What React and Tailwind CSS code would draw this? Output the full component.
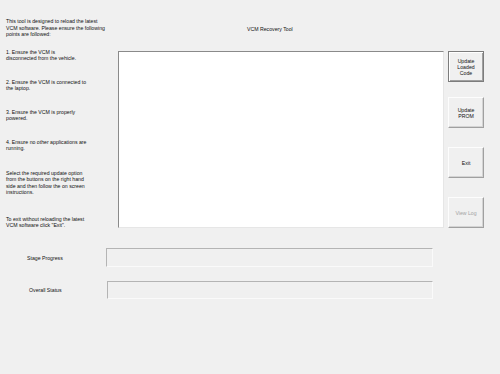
import React from "react";

const font = { fontFamily: '"Liberation Sans", Arial, sans-serif' };

function Btn({ lines, first, disabled, className = "" }) {
  const base =
    "w-[36px] h-[31px] flex flex-col items-center justify-center bg-[#f0f0f0] text-[5.2px] leading-[6px] text-center";
  const border = first
    ? "border border-[#7c7c7c] shadow-[inset_1px_1px_0_#ffffff,inset_-1px_-1px_0_#a0a0a0]"
    : "border border-t-[#fdfdfd] border-l-[#fdfdfd] border-b-[#a0a0a0] border-r-[#a0a0a0] shadow-[inset_-1px_-1px_0_#d4d4d4]";
  return (
    <div className={`${base} ${border} ${disabled ? "text-[#a3a3a3]" : "text-[#111]"} ${className}`}>
      {lines.map((l, i) => (
        <span key={i}>{l}</span>
      ))}
    </div>
  );
}

export default function App() {
  return (
    <div
      className="w-[500px] h-[374px] bg-[#f0f0f0] text-[#111] text-[5.2px] leading-[6.5px] overflow-hidden"
      style={font}
    >
      <div className="flex h-[228px]">
        <div className="w-[118px] pl-[6px] pt-[18px] flex flex-col">
          <p>
            This tool is designed to reload the latest
            <br />
            VCM software. Please ensure the following
            <br />
            points are followed:
          </p>
          <p className="mt-[11px]">
            1. Ensure the VCM is
            <br />
            disconnected from the vehicle.
          </p>
          <p className="mt-[17px]">
            2. Ensure the VCM is connected to
            <br />
            the laptop.
          </p>
          <p className="mt-[17px]">
            3. Ensure the VCM is properly
            <br />
            powered.
          </p>
          <p className="mt-[17px]">
            4. Ensure no other applications are
            <br />
            running.
          </p>
          <p className="mt-[18px]">
            Select the required update option
            <br />
            from the buttons on the right hand
            <br />
            side and then follow the on screen
            <br />
            instructions.
          </p>
          <p className="mt-[20px]">
            To exit without reloading the latest
            <br />
            VCM software click "Exit".
          </p>
        </div>
        <div className="flex flex-col">
          <div className="h-[51px] pt-[26px] pl-[129px]">VCM Recovery Tool</div>
          <div className="flex">
            <div className="w-[326px] h-[177px] bg-white border border-t-[#8a8a8a] border-l-[#8a8a8a] border-b-[#e6e6e6] border-r-[#e6e6e6]" />
            <div className="ml-[4px] flex flex-col">
              <Btn first lines={["Update", "Loaded", "Code"]} />
              <Btn className="mt-[15px]" lines={["Update", "PROM"]} />
              <Btn className="mt-[19px]" lines={["Exit"]} />
              <Btn className="mt-[19px]" disabled lines={["View Log"]} />
            </div>
          </div>
        </div>
      </div>
      <div className="flex items-center mt-[20px]">
        <div className="w-[106px] pl-[27px] pt-[2px]">Stage Progress</div>
        <div className="w-[327px] h-[19px] border border-t-[#b4b4b4] border-l-[#b4b4b4] border-b-[#fafafa] border-r-[#fafafa]" />
      </div>
      <div className="flex items-center mt-[14px]">
        <div className="w-[107px] pl-[29px] pt-[1px]">Overall Status</div>
        <div className="w-[326px] h-[18px] border border-t-[#b4b4b4] border-l-[#b4b4b4] border-b-[#fafafa] border-r-[#fafafa]" />
      </div>
    </div>
  );
}
